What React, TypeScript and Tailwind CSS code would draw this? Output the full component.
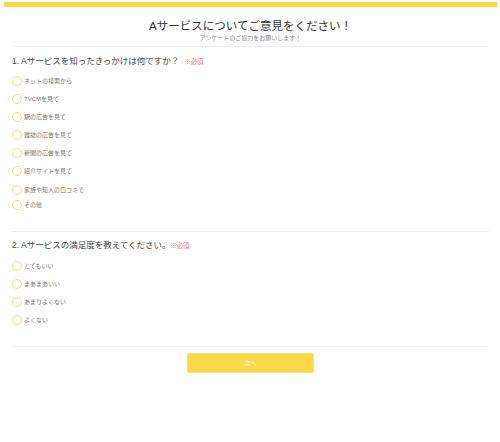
import React from "react";

const q1 = [
  "ネットの検索から",
  "TVCMを見て",
  "駅の広告を見て",
  "雑誌の広告を見て",
  "新聞の広告を見て",
  "紹介サイトを見て",
  "家族や知人の口コミで",
  "その他",
];
const q2 = ["とてもいい", "まあまあいい", "あまりよくない", "よくない"];

function Option({ label, className }: { label: string; className?: string }) {
  return (
    <label className={"flex items-center h-[10px] " + (className ?? "")}>
      <span className="w-[10px] h-[10px] rounded-full border border-[#f6dc7c] bg-white shrink-0" />
      <span className="ml-[2px] text-[6px] leading-[10px] text-[#777]">{label}</span>
    </label>
  );
}

function Question({ num, text, tight }: { num: string; text: string; tight?: boolean }) {
  return (
    <div className="flex items-baseline h-[12px]">
      <span className="text-[8.5px] leading-[12px] text-[#444]">
        {num} {text}
      </span>
      <span className={(tight ? "ml-[0px]" : "ml-[5px]") + " text-[6.3px] text-[#e57b7b]"}>※必須</span>
    </div>
  );
}

export default function App() {
  return (
    <div
      className="w-[500px] h-[442px] bg-white pl-[4px] pr-[3px] pt-[2px]"
      style={{ fontFamily: '"Liberation Sans", "Noto Sans CJK JP", sans-serif' }}
    >
      <div className="h-[5px] bg-[#f9d849]" />
      <div className="px-[8px]">
        <h1 className="mt-[12px] text-center text-[11.5px] leading-[14px] font-normal text-[#333]">
          Aサービスについてご意見をください！
        </h1>
        <p className="text-center text-[6px] leading-[8px] mt-[0.5px] text-[#888]">
          アンケートのご協力をお願いします！
        </p>
        <div className="mt-[4.5px] h-px bg-[#eeeeee]" />

        <div className="mt-[7.5px]">
          <Question num="1." text="Aサービスを知ったきっかけは何ですか？" />
        </div>
        <div className="mt-[9px] flex flex-col">
          {q1.map((o, i) => (
            <Option
              key={o}
              label={o}
              className={i === 0 ? "" : i === q1.length - 1 ? "mt-[5.8px]" : "mt-[8.2px]"}
            />
          ))}
        </div>

        <div className="mt-[21px] h-px bg-[#eeeeee]" />
        <div className="mt-[7px]">
          <Question num="2." text="Aサービスの満足度を教えてください。" tight />
        </div>
        <div className="mt-[9.5px] flex flex-col gap-[8.1px]">
          {q2.map((o) => (
            <Option key={o} label={o} />
          ))}
        </div>

        <div className="mt-[20.7px] h-px bg-[#f2f2f2]" />
        <div className="mt-[6.3px] flex justify-center">
          <button className="w-[127px] h-[20px] rounded-[2px] bg-[#f9d849] border border-[#fbe27a] text-white text-[6px] leading-[18px]">
            次へ
          </button>
        </div>
      </div>
    </div>
  );
}
